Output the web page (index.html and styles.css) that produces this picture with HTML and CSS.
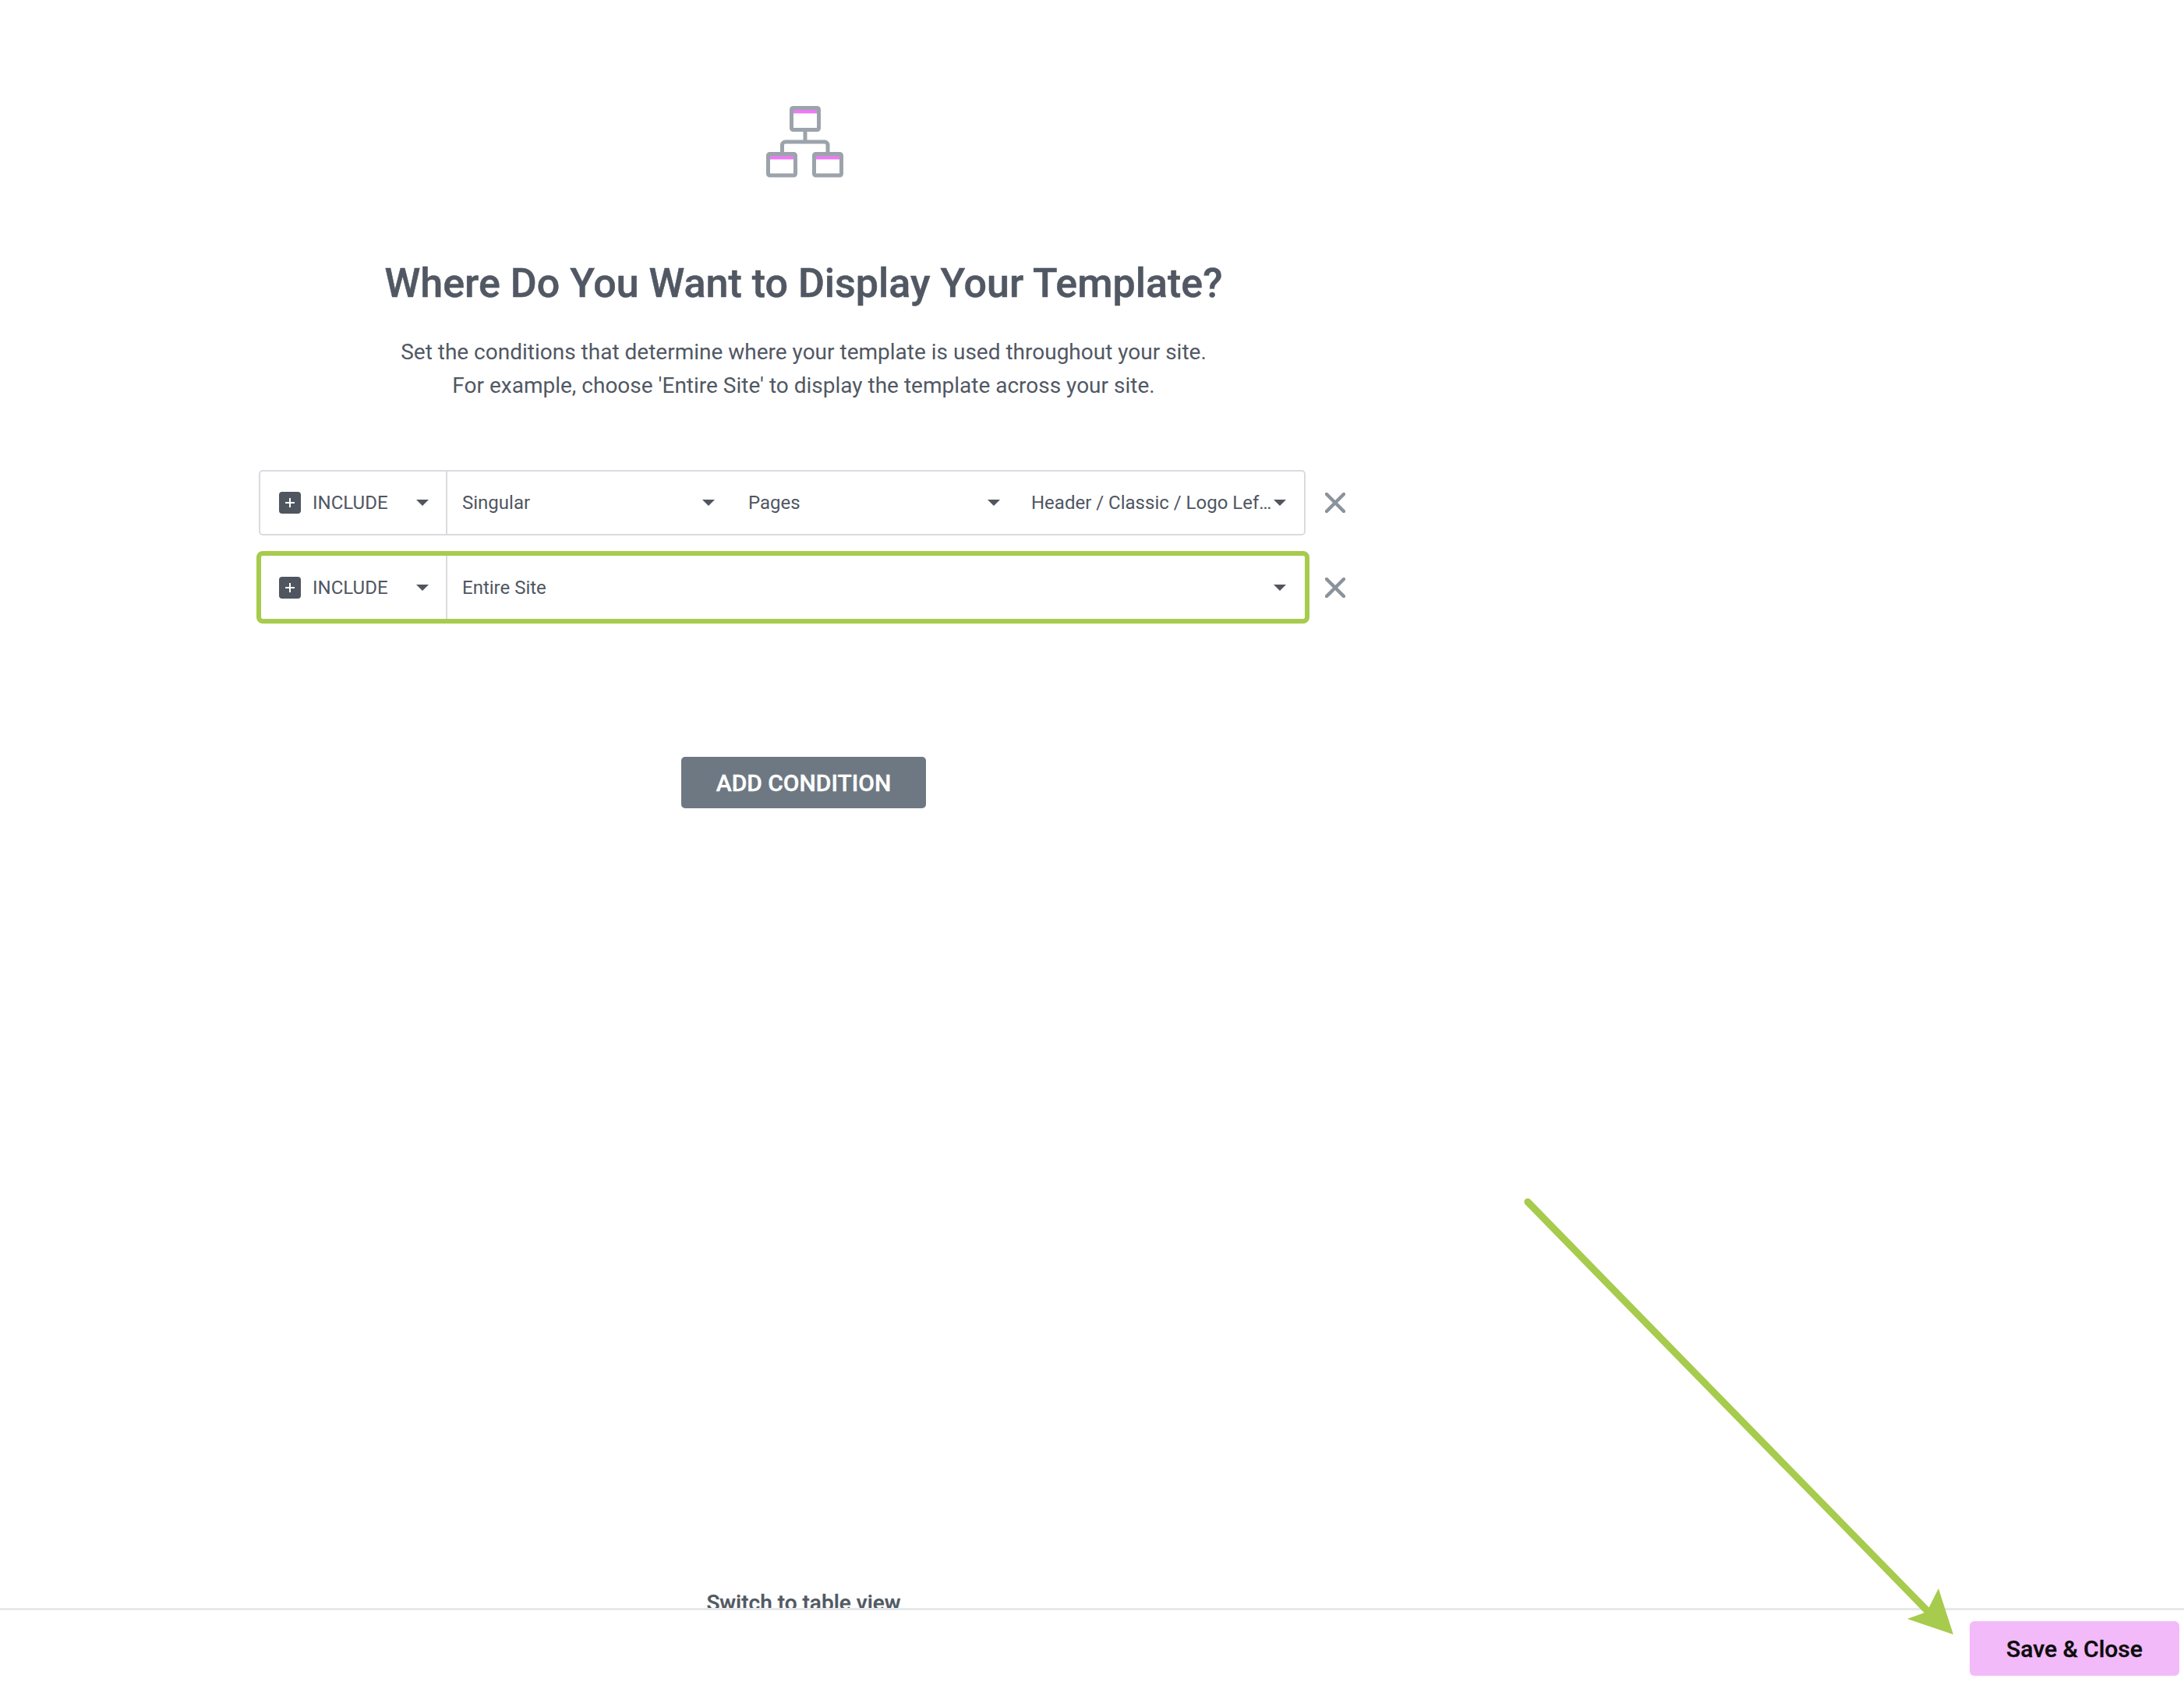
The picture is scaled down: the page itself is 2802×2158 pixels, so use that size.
FILE: index.html
```html
<!DOCTYPE html>
<html>
<head>
<meta charset="utf-8">
<title>Conditions</title>
<link rel="stylesheet" href="styles.css">
</head>
<body>
	<div class="page">
		<!--conditions screen-->
		<div class="main">
			<svg class="topIcon" width="100" height="92" viewBox="0 0 100 92">
				<g fill="none" stroke="#9ca3ab" stroke-width="5" stroke-linejoin="round">
					<rect x="32.5" y="2.5" width="35" height="28" rx="2" fill="#fff"/>
					<rect x="2.5" y="61.5" width="35" height="27.5" rx="2" fill="#fff"/>
					<rect x="61.5" y="61.5" width="35" height="27.5" rx="2" fill="#fff"/>
					<path d="M50 31V46M20.5 60V50a4 4 0 0 1 4-4H75a4 4 0 0 1 4 4V60"/>
				</g>
				<rect x="35" y="5" width="30" height="4.5" fill="#e97cf3"/>
				<rect x="5" y="64" width="30" height="4.5" fill="#e97cf3"/>
				<rect x="64" y="64" width="30" height="4.5" fill="#e97cf3"/>
			</svg>
			<h1 class="title">Where Do You Want to Display Your Template?</h1>
			<p class="intro">Set the conditions that determine where your template is used throughout your site.<br>For example, choose 'Entire Site' to display the template across your site.</p>

			<div class="conditions">
				<div class="condRow">
					<div class="cond">
						<div class="typeCell">
							<span class="plus"><svg width="14" height="14" viewBox="0 0 14 14"><path d="M7 1V13M1 7H13" stroke="#fff" stroke-width="2"/></svg></span>
							<span class="typeLabel">INCLUDE</span>
							<span class="caret"></span>
						</div>
						<div class="field fieldMain">
							<span class="fieldText">Singular</span>
							<span class="caret"></span>
						</div>
						<div class="field fieldSub">
							<span class="fieldText">Pages</span>
							<span class="caret"></span>
						</div>
						<div class="field fieldLast">
							<span class="fieldText">Header / Classic / Logo Lef…</span>
							<span class="caret"></span>
						</div>
					</div>
					<svg class="remove" width="26" height="26" viewBox="0 0 26 26"><path d="M2 2L24 24M24 2L2 24" stroke="#8a929b" stroke-width="4.5" stroke-linecap="round"/></svg>
				</div>
				<div class="condRow">
					<div class="cond condActive">
						<div class="typeCell">
							<span class="plus"><svg width="14" height="14" viewBox="0 0 14 14"><path d="M7 1V13M1 7H13" stroke="#fff" stroke-width="2"/></svg></span>
							<span class="typeLabel">INCLUDE</span>
							<span class="caret"></span>
						</div>
						<div class="field fieldWide">
							<span class="fieldText">Entire Site</span>
							<span class="caret"></span>
						</div>
					</div>
					<svg class="remove" width="26" height="26" viewBox="0 0 26 26"><path d="M2 2L24 24M24 2L2 24" stroke="#8a929b" stroke-width="4.5" stroke-linecap="round"/></svg>
				</div>
			</div>

			<button class="addBtn">ADD CONDITION</button>
			<div class="switchView">Switch to table view</div>
		</div>
		<!--footer-->
		<div class="footer">
			<div class="footLine"></div>
			<button class="saveBtn">Save &amp; Close</button>
		</div>
	</div>

	<svg class="arrow" width="2802" height="2158" viewBox="0 0 2802 2158">
		<path d="M1960 1542L2472 2066" stroke="#a6cb4d" stroke-width="9" stroke-linecap="round"/>
		<polygon points="2487,2038 2506,2097 2447,2077 2472,2068" fill="#a6cb4d"/>
	</svg>
</body>
</html>
```

FILE: styles.css
```css
* {
	box-sizing: border-box;
}

html, body {
	margin: 0;
	padding: 0;
	background-color: white;
}

body {
	font-family: Roboto, "Liberation Sans", sans-serif;
	color: #4f5661;
}

.page {
	display: flex;
	flex-direction: column;
	height: 2158px;
	overflow: hidden;
}

.main {
	flex: 1;
	display: flex;
	flex-direction: column;
	align-items: center;
	width: 2062px;
	padding-top: 136px;
	overflow: hidden;
}

.topIcon {
	display: block;
	margin-left: 4px;
}

.title {
	margin: 104px 0 0 0;
	font-size: 52px;
	line-height: 64px;
	font-weight: 500;
	color: #515863;
	-webkit-text-stroke: 0.5px #515863;
}

.intro {
	margin: 34px 0 0 0;
	font-size: 28px;
	line-height: 43px;
	text-align: center;
	color: #515863;
}

.conditions {
	align-self: flex-start;
	margin: 87px 0 0 329px;
	display: flex;
	flex-direction: column;
	gap: 20px;
}

.condRow {
	display: flex;
	align-items: center;
	gap: 20px;
}

.cond {
	display: flex;
	width: 1343px;
	height: 84px;
	margin: 0 5px 0 3px;
	border: 2px solid #dadbe0;
	border-radius: 5px;
	background-color: white;
}

.condActive {
	width: 1351px;
	height: 93px;
	margin: 0;
	border: 6px solid #a6cb4d;
	border-radius: 8px;
}

.typeCell {
	display: flex;
	align-items: center;
	width: 240px;
	padding: 0 22px 0 24px;
	border-right: 2px solid #dadbe0;
	font-size: 24px;
	flex-shrink: 0;
}

.condActive .typeCell {
	width: 239px;
	padding-left: 23px;
}

.plus {
	display: flex;
	align-items: center;
	justify-content: center;
	width: 28px;
	height: 28px;
	margin-right: 15px;
	border-radius: 4px;
	background-color: #50565f;
}

.typeLabel {
	flex: 1;
}

.caret {
	width: 0;
	height: 0;
	flex-shrink: 0;
	border-left: 8px solid transparent;
	border-right: 8px solid transparent;
	border-top: 8px solid #50565f;
}

.field {
	display: flex;
	align-items: center;
	font-size: 24px;
}

.fieldText {
	flex: 1;
	white-space: nowrap;
}

.fieldMain {
	width: 363px;
	padding: 0 20px 0 19px;
}

.fieldSub {
	width: 366px;
	padding: 0 20px 0 23px;
}

.fieldLast {
	flex: 1;
	padding: 0 23px 0 20px;
}

.fieldWide {
	flex: 1;
	padding: 0 24px 0 19px;
}

.remove {
	flex-shrink: 0;
}

.addBtn {
	margin-top: 171px;
	width: 314px;
	height: 66px;
	border: 0;
	border-radius: 5px;
	background-color: #6d7882;
	color: white;
	font-family: Roboto, sans-serif;
	font-size: 30px;
	font-weight: 500;
	-webkit-text-stroke: 0.4px white;
}

.switchView {
	margin-top: auto;
	margin-bottom: -9px;
	font-size: 28px;
	line-height: 36px;
	font-weight: 500;
	color: #515962;
	-webkit-text-stroke: 0.3px #515962;
}

.footer {
	position: relative;
	display: flex;
	justify-content: flex-end;
	align-items: flex-start;
	height: 92px;
	padding: 14px 6px 0 0;
	background-color: white;
}

.footLine {
	position: absolute;
	left: 0;
	right: 0;
	top: -3px;
	height: 3px;
	background-color: #e6e8ea;
}

.saveBtn {
	width: 269px;
	height: 70px;
	border: 0;
	border-radius: 6px;
	background-color: #f3baf9;
	color: #0c0d0e;
	font-family: Roboto, sans-serif;
	font-size: 30px;
	font-weight: 500;
	-webkit-text-stroke: 0.4px #0c0d0e;
}

.arrow {
	position: absolute;
	left: 0;
	top: 0;
}
```
